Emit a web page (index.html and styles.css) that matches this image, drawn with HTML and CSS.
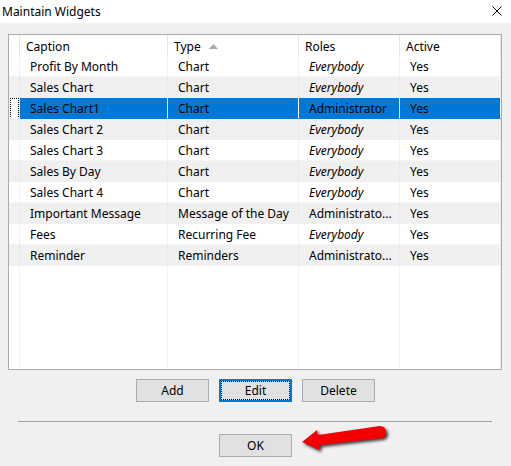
FILE: index.html
```html
<!DOCTYPE html>
<html lang="en">
<head>
    <meta charset="UTF-8">
    <meta name="viewport" content="width=device-width, initial-scale=1.0">
    <title>Maintain Widgets</title>
    <link rel="stylesheet" href="styles.css">
</head>
<body>

    <!-- Title Bar -->
    <div class="titlebar">
        <span class="title">Maintain Widgets</span>
        <svg class="close" width="10" height="10" viewBox="0 0 10 10">
            <path d="M0.5 0.5 L9.5 9.5 M9.5 0.5 L0.5 9.5" stroke="#000" stroke-width="1" fill="none"/>
        </svg>
    </div>

    <!-- Dialog Body -->
    <div class="dialog">

        <!-- Widget List -->
        <div class="list">
            <div class="row head">
                <div class="cell gutter"></div>
                <div class="cell">Caption</div>
                <div class="cell">Type
                    <svg class="sort" width="9" height="5" viewBox="0 0 9 5"><polygon points="4.5,0 9,5 0,5" fill="#a9a9a9"/></svg>
                </div>
                <div class="cell">Roles</div>
                <div class="cell">Active</div>
            </div>

            <div id="widget-rows"></div>

            <div class="row filler">
                <div class="cell gutter"></div>
                <div class="cell"></div>
                <div class="cell"></div>
                <div class="cell"></div>
                <div class="cell"></div>
            </div>
        </div>

        <!-- Action Buttons -->
        <div class="actions">
            <button class="button">Add</button>
            <button class="button default">Edit</button>
            <button class="button">Delete</button>
        </div>

        <div class="separator"></div>

        <div class="actions">
            <button class="button">OK</button>
        </div>
    </div>

    <!-- Pointer arrow -->
    <svg class="arrow" width="100" height="42" viewBox="0 0 100 42">
        <path d="M7 24 L22 12 L23 17 L85 8 A6.2 6.2 0 0 1 87 20 L25 27 L24 32 Z" fill="#f50000"/>
    </svg>

    <script>
        const widgets = [
            { caption: "Profit By Month", type: "Chart", roles: "Everybody", active: "Yes" },
            { caption: "Sales Chart", type: "Chart", roles: "Everybody", active: "Yes" },
            { caption: "Sales Chart1", type: "Chart", roles: "Administrator", active: "Yes", selected: true },
            { caption: "Sales Chart 2", type: "Chart", roles: "Everybody", active: "Yes" },
            { caption: "Sales Chart 3", type: "Chart", roles: "Everybody", active: "Yes" },
            { caption: "Sales By Day", type: "Chart", roles: "Everybody", active: "Yes" },
            { caption: "Sales Chart 4", type: "Chart", roles: "Everybody", active: "Yes" },
            { caption: "Important Message", type: "Message of the Day", roles: "Administrato...", active: "Yes" },
            { caption: "Fees", type: "Recurring Fee", roles: "Everybody", active: "Yes" },
            { caption: "Reminder", type: "Reminders", roles: "Administrato...", active: "Yes" }
        ];

        const rows = document.getElementById('widget-rows');
        widgets.forEach((w, index) => {
            let cls = 'row';
            if (index % 2 === 1) cls += ' alt';
            if (w.selected) cls += ' selected';
            const roleCls = w.roles === 'Everybody' ? 'cell everyone' : 'cell';
            rows.innerHTML += `
                <div class="${cls}">
                    <div class="cell gutter"><span class="focus"></span></div>
                    <div class="cell">${w.caption}</div>
                    <div class="cell">${w.type}</div>
                    <div class="${roleCls}">${w.roles}</div>
                    <div class="cell">${w.active}</div>
                </div>
            `;
        });
    </script>

</body>
</html>
```

FILE: styles.css
```css
/* General Reset */
* {
    margin: 0;
    padding: 0;
    box-sizing: border-box;
}

body {
    font-family: 'Noto Sans', 'Liberation Sans', sans-serif;
    font-size: 12px;
    color: #000;
    background-color: #f0f0f0;
    width: 511px;
    height: 466px;
    overflow: hidden;
    position: relative;
}

/* Title Bar */
.titlebar {
    height: 23px;
    background-color: #fff;
    display: flex;
    align-items: center;
    justify-content: space-between;
    padding: 0 9px 0 2px;
}

.title {
    line-height: 23px;
}

.close {
    display: block;
    margin-top: -1px;
}

/* Dialog Body */
.dialog {
    padding-top: 11px;
}

/* List */
.list {
    margin-left: 8px;
    width: 494px;
    height: 336px;
    border: 1px solid #ababab;
    background-color: #fff;
    display: flex;
    flex-direction: column;
    overflow: hidden;
}

.row {
    display: grid;
    grid-template-columns: 11px 148px 131px 101px 101px;
    height: 21px;
    line-height: 18px;
}

.cell {
    padding: 2px 0 0 10px;
    white-space: nowrap;
    overflow: hidden;
    border-right: 1px dotted #e3e3e3;
    border-bottom: 1px dotted #ececec;
}

.cell.gutter {
    padding: 0;
    position: relative;
}

.everyone {
    font-style: italic;
}

.row.alt .cell {
    background-color: #f0f0f0;
    border-bottom-color: #f0f0f0;
}

.row.selected .cell {
    background-color: #0078d7;
    border-right: 1px solid #fff;
    border-bottom-color: #0078d7;
}

.row.selected .cell.gutter {
    background-color: #fff;
    border-right: 1px dotted #e3e3e3;
    border-bottom-color: #fff;
}

.row.selected .focus {
    position: absolute;
    left: 1px;
    top: 0;
    width: 9px;
    height: 21px;
    border: 1px dotted #000;
}

/* Header */
.row.head {
    height: 21px;
    line-height: 19px;
}

.row.head .cell {
    padding: 2px 0 0 6px;
    border-right: 1px solid #e5e5e5;
    border-bottom: none;
}

.row.head .cell.gutter {
    padding: 0;
}

.sort {
    margin-left: 5px;
    vertical-align: 2px;
}

.row.filler {
    flex: 1;
    height: auto;
    padding-bottom: 2px;
}

.row.filler .cell {
    border-bottom: none;
}

/* Buttons */
.actions {
    display: flex;
    justify-content: center;
    gap: 10px;
    margin-top: 9px;
}

.button {
    width: 73px;
    height: 23px;
    font-family: inherit;
    font-size: 12px;
    color: #000;
    background-color: #e1e1e1;
    border: 1px solid #adadad;
}

.button.default {
    border: 2px solid #0078d7;
    outline: 1px dotted #000;
    outline-offset: -3px;
}

.separator {
    margin: 19px 19px 12px 18px;
    height: 1px;
    background-color: #a0a0a0;
}

.separator + .actions {
    margin-top: 0;
}

/* Arrow annotation over the dialog */
.arrow {
    position: absolute;
    left: 295px;
    top: 418px;
    filter: drop-shadow(2px 2px 1.5px rgba(0, 0, 0, 0.75));
}
```
